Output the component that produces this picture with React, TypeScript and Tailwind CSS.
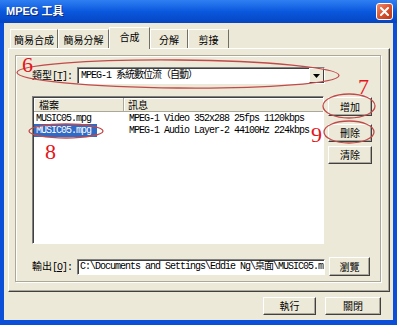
import React from "react";

function Btn({ label, cls }: { label: string; cls: string }) {
  return (
    <div
      className={
        "flex items-center justify-center bg-[#ECE9D8] border border-t-white border-l-white border-r-[#404040] border-b-[#404040] shadow-[inset_-1px_-1px_0_#ACA899] text-[10px] leading-none text-black " +
        cls
      }
    >
      {label}
    </div>
  );
}

function Tab({ label, cls, active }: { label: string; cls: string; active?: boolean }) {
  return (
    <div
      className={
        "flex items-center justify-center text-[10px] leading-none text-black border-t border-l border-white border-r border-r-[#716F64] bg-[#ECE9D8] " +
        (active ? "h-[22px] pb-[3px] relative z-10 mb-[-1px] " : "h-[19px] pt-[1px] ") +
        cls
      }
    >
      {label}
    </div>
  );
}

export default function App() {
  return (
    <div className="w-[397px] h-[325px] bg-[#0B4FD9] flex flex-col relative overflow-hidden font-['Noto_Sans_CJK_TC',sans-serif]">
      {/* Title bar */}
      <div className="h-[23px] shrink-0 flex items-center justify-between pl-[6px] pr-[4px] bg-gradient-to-b from-[#2F7FF2] via-[#0A58DD] to-[#0645C2]">
        <div className="text-white font-bold text-[11px] leading-none font-['Liberation_Sans','Noto_Sans_CJK_TC',sans-serif] [text-shadow:1px_1px_0_#0A2A80]">
          MPEG 工具
        </div>
        <div className="w-[17px] h-[17px] rounded-[3px] border border-white bg-gradient-to-br from-[#F08A68] via-[#D9532E] to-[#B8381A] flex items-center justify-center">
          <svg width="9" height="9" viewBox="0 0 9 9">
            <path d="M1 1 L8 8 M8 1 L1 8" stroke="white" strokeWidth="2" strokeLinecap="square" />
          </svg>
        </div>
      </div>

      {/* Body */}
      <div className="flex-1 mx-[4px] mb-[5px] bg-[#ECE9D8] flex flex-col">
        {/* tabs */}
        <div className="h-[25px] shrink-0 pl-[6px] flex items-end">
          <Tab label="簡易合成" cls="w-[48px]" />
          <Tab label="簡易分解" cls="w-[51px]" />
          <Tab label="合成" cls="w-[41px]" active />
          <Tab label="分解" cls="w-[38px]" />
          <Tab label="剪接" cls="w-[41px]" />
        </div>

        {/* tab page */}
        <div className="ml-[4px] w-[382px] h-[244px] shrink-0 border border-t-white border-l-white border-r-[#404040] border-b-[#404040] shadow-[inset_-1px_-1px_0_#ACA899] pl-[6px] pt-[6px]">
          {/* group box */}
          <div className="w-[366px] h-[227px] border border-[#ACA899] shadow-[1px_1px_0_white,inset_1px_1px_0_white] flex flex-col pl-[16px]">
            {/* type row */}
            <div className="mt-[11px] flex items-center h-[17px]">
              <div className="w-[45px] text-[10px] leading-none text-black">
                類型<span className="font-['Liberation_Mono',monospace] tracking-[-1px]">[<span className="underline">T</span>]:</span>
              </div>
              <div className="w-[248px] h-[17px] bg-white border border-t-[#808080] border-l-[#808080] border-r-white border-b-white shadow-[inset_1px_1px_0_#404040] flex items-center">
                <div className="flex-1 pl-[3px] text-[10px] leading-none text-black font-['Liberation_Mono','Noto_Sans_CJK_TC',monospace] tracking-[-1px] whitespace-nowrap">
                  MPEG-1 系統數位流（自動）
                </div>
                <div className="w-[15px] h-[15px] bg-[#ECE9D8] border border-t-white border-l-white border-r-[#404040] border-b-[#404040] flex items-center justify-center">
                  <svg width="7" height="4" viewBox="0 0 7 4">
                    <path d="M0 0 H7 L3.5 4 Z" fill="black" />
                  </svg>
                </div>
              </div>
            </div>

            {/* list row */}
            <div className="mt-[12px] flex">
              <div className="w-[292px] h-[148px] bg-white border border-t-[#808080] border-l-[#808080] border-r-white border-b-white shadow-[inset_1px_1px_0_#404040] flex flex-col pl-[1px] pt-[1px]">
                <div className="h-[14px] flex shrink-0">
                  <div className="w-[90px] bg-[#ECE9D8] border-r border-b border-r-[#ACA899] border-b-[#ACA899] shadow-[inset_1px_1px_0_white] text-[10px] leading-none flex items-center pl-[5px]">
                    檔案
                  </div>
                  <div className="flex-1 bg-[#ECE9D8] border-b border-b-[#ACA899] shadow-[inset_1px_1px_0_white] text-[10px] leading-none flex items-center pl-[4px]">
                    訊息
                  </div>
                </div>
                <div className="font-['Liberation_Mono',monospace] text-[10px] tracking-[-1px] leading-none text-black">
                  <div className="h-[12px] flex items-center mt-[1px]">
                    <div className="w-[90px] pl-[2px]">MUSIC05.mpg</div>
                    <div className="pl-[5px] whitespace-nowrap">MPEG-1 Video 352x288 25fps 1120kbps</div>
                  </div>
                  <div className="h-[12px] flex items-center">
                    <div className="w-[90px] pl-[0px]">
                      <span className="bg-[#316AC5] text-white pl-[2px] pr-[6px] py-[1px]">MUSIC05.mpg</span>
                    </div>
                    <div className="pl-[5px] whitespace-nowrap">MPEG-1 Audio Layer-2 44100Hz 224kbps</div>
                  </div>
                </div>
              </div>
              <div className="ml-[4px] flex flex-col">
                <Btn label="增加" cls="w-[44px] h-[19px] mt-[1px]" />
                <Btn label="刪除" cls="w-[44px] h-[18px] mt-[8px]" />
                <Btn label="清除" cls="w-[44px] h-[18px] mt-[4px]" />
              </div>
            </div>

            {/* output row */}
            <div className="mt-[13px] flex items-center">
              <div className="w-[45px] text-[10px] leading-none text-black">
                輸出<span className="font-['Liberation_Mono',monospace] tracking-[-1px]">[<span className="underline">O</span>]:</span>
              </div>
              <div className="w-[248px] h-[16px] bg-white border border-t-[#808080] border-l-[#808080] border-r-white border-b-white shadow-[inset_1px_1px_0_#404040] overflow-hidden flex items-center">
                <div className="pl-[2px] text-[10px] leading-none text-black font-['Liberation_Mono','Noto_Sans_CJK_TC',monospace] tracking-[-1px] whitespace-nowrap">
                  C:\Documents and Settings\Eddie Ng\桌面\MUSIC05.m
                </div>
              </div>
              <Btn label="瀏覽" cls="w-[41px] h-[19px] ml-[4px]" />
            </div>
          </div>
        </div>

        {/* bottom buttons */}
        <div className="flex justify-end pr-[12px] mt-[5px] gap-[9px]">
          <Btn label="執行" cls="w-[53px] h-[18px]" />
          <Btn label="關閉" cls="w-[56px] h-[18px]" />
        </div>
      </div>

      {/* annotations */}
      <svg className="absolute inset-0 pointer-events-none" width="397" height="325">
        <ellipse cx="178" cy="74" rx="161" ry="14" fill="none" stroke="#C24A4A" strokeWidth="1.3" transform="rotate(0.5 178 74)" />
        <ellipse cx="349" cy="106" rx="26" ry="12" fill="none" stroke="#C24A4A" strokeWidth="1.3" />
        <ellipse cx="349" cy="132" rx="25" ry="11" fill="none" stroke="#C24A4A" strokeWidth="1.3" />
        <ellipse cx="66" cy="131" rx="37" ry="7" fill="none" stroke="#C24A4A" strokeWidth="1.3" />
      </svg>
      <span className="absolute left-[22px] top-[54px] text-[22px] leading-none text-[#E5141A] font-['Liberation_Serif',serif]">6</span>
      <span className="absolute left-[358px] top-[76px] text-[22px] leading-none text-[#E5141A] font-['Liberation_Serif',serif]">7</span>
      <span className="absolute left-[45px] top-[141px] text-[22px] leading-none text-[#E5141A] font-['Liberation_Serif',serif]">8</span>
      <span className="absolute left-[311px] top-[124px] text-[22px] leading-none text-[#E5141A] font-['Liberation_Serif',serif]">9</span>
    </div>
  );
}
